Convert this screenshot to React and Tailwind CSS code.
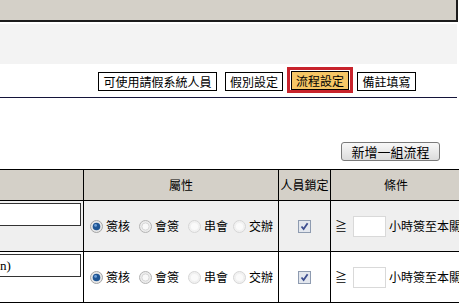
import React from 'react'

function Tab({ w, children }) {
  return (
    <div className={`${w} mt-[5px] h-[19px] border border-black bg-white flex items-center justify-center whitespace-nowrap`}>
      {children}
    </div>
  )
}

function Radio({ state }) {
  if (state === 'on') {
    return (
      <svg width="13" height="13" viewBox="0 0 13 13" className="shrink-0">
        <circle cx="6.5" cy="6.5" r="6" fill="#e8e8e8" stroke="#a4a4a4" />
        <circle cx="6.5" cy="6.5" r="3.8" fill="#1f5593" />
        <circle cx="5.6" cy="5.4" r="1.4" fill="#6fa0d8" />
      </svg>
    )
  }
  if (state === 'off') {
    return (
      <svg width="13" height="13" viewBox="0 0 13 13" className="shrink-0">
        <circle cx="6.5" cy="6.5" r="6" fill="#ececec" stroke="#b4b4b4" />
        <circle cx="6.5" cy="6.5" r="3.6" fill="#f9f9f9" stroke="#cfcfcf" strokeWidth="0.8" />
      </svg>
    )
  }
  return (
    <svg width="13" height="13" viewBox="0 0 13 13" className="shrink-0">
      <circle cx="6.5" cy="6.5" r="6" fill="#f1f1f1" stroke="#d6d6d6" />
      <circle cx="6.5" cy="6.5" r="3.6" fill="#fafafa" />
    </svg>
  )
}

function Check() {
  return (
    <span className="w-[13px] h-[13px] border border-[#8e9bb0] bg-[#e3e7ee] flex items-center justify-center">
      <svg width="11" height="11" viewBox="0 0 11 11">
        <path d="M2.5 5.5 L4.6 8 L8.6 2.2" fill="none" stroke="#3c4d8f" strokeWidth="1.8" />
      </svg>
    </span>
  )
}

function Row({ bg, text }) {
  return (
    <div className={`flex h-[51px] border-b border-black ${bg}`}>
      <div className="w-[84px] shrink-0 border-r border-black pt-[2px]">
        <div className="w-[81px] h-[23px] border-y border-r border-[#333] bg-white flex items-center font-['Liberation_Serif',serif] text-[13px]">
          {text}
        </div>
      </div>
      <div className="w-[195px] shrink-0 border-r border-black flex items-center pl-[6px] text-[12px] whitespace-nowrap">
        <Radio state="on" />
        <span className="ml-[3px]">簽核</span>
        <span className="ml-[9px]"><Radio state="off" /></span>
        <span className="ml-[3px]">會簽</span>
        <span className="ml-[9px]"><Radio state="dim" /></span>
        <span className="ml-[3px]">串會</span>
        <span className="ml-[5px]"><Radio state="dim" /></span>
        <span className="ml-[3px]">交辦</span>
      </div>
      <div className="w-[52px] shrink-0 border-r border-black flex items-center justify-center">
        <Check />
      </div>
      <div className="w-[200px] shrink-0 flex items-center pl-[4px] text-[12px] whitespace-nowrap">
        <span>≧</span>
        <div className="ml-[6px] w-[33px] h-[21px] border border-[#d9d9d9] bg-white" />
        <span className="ml-[3px]">小時簽至本關</span>
      </div>
    </div>
  )
}

export default function App() {
  return (
    <div className="w-[459px] h-[305px] overflow-hidden bg-white text-black font-['Noto_Sans_CJK_TC',sans-serif]">
      <div className="h-[22px] w-[458px] bg-[#d4d0c8] border-r-2 border-b-2 border-[#1c1c1c]" />
      <div className="mt-[2px] h-[40px] w-[457px] bg-[#f3f3f3]" />

      <div className="mt-[3px] flex items-start pl-[98px] text-[12px] leading-none">
        <Tab w="w-[119px]">可使用請假系統人員</Tab>
        <div className="ml-2">
          <Tab w="w-[58px]">假別設定</Tab>
        </div>
        <div className="ml-1 h-[26px] border-[3px] border-[#c8232c] px-px pt-px">
          <div className="w-[58px] h-[19px] border border-black bg-[#f6c766] flex items-center justify-center">
            流程設定
          </div>
        </div>
        <div className="ml-1">
          <Tab w="w-[59px]">備註填寫</Tab>
        </div>
      </div>

      <div className="mt-[4px] h-px w-[457px] bg-[#14143a]" />

      <div className="mt-[44px] flex pl-[341px]">
        <button className="w-[99px] h-[19px] rounded-[3px] border border-[#7a7a7a] bg-gradient-to-b from-[#f8f8f8] to-[#dcdcdc] text-[13px] leading-none flex items-center justify-center">
          新增一組流程
        </button>
      </div>

      <div className="mt-[8px] w-[540px]">
        <div className="flex h-[32px] border-y border-black bg-[#d4d0c8] text-[12px]">
          <div className="w-[84px] shrink-0 border-r border-black" />
          <div className="w-[195px] shrink-0 border-r border-black flex items-center justify-center">屬性</div>
          <div className="w-[52px] shrink-0 border-r border-black flex items-center justify-center">人員鎖定</div>
          <div className="w-[130px] shrink-0 flex items-center justify-center">條件</div>
        </div>
        <Row bg="bg-[#efefef]" text="" />
        <Row bg="bg-white" text="n)" />
      </div>
    </div>
  )
}
